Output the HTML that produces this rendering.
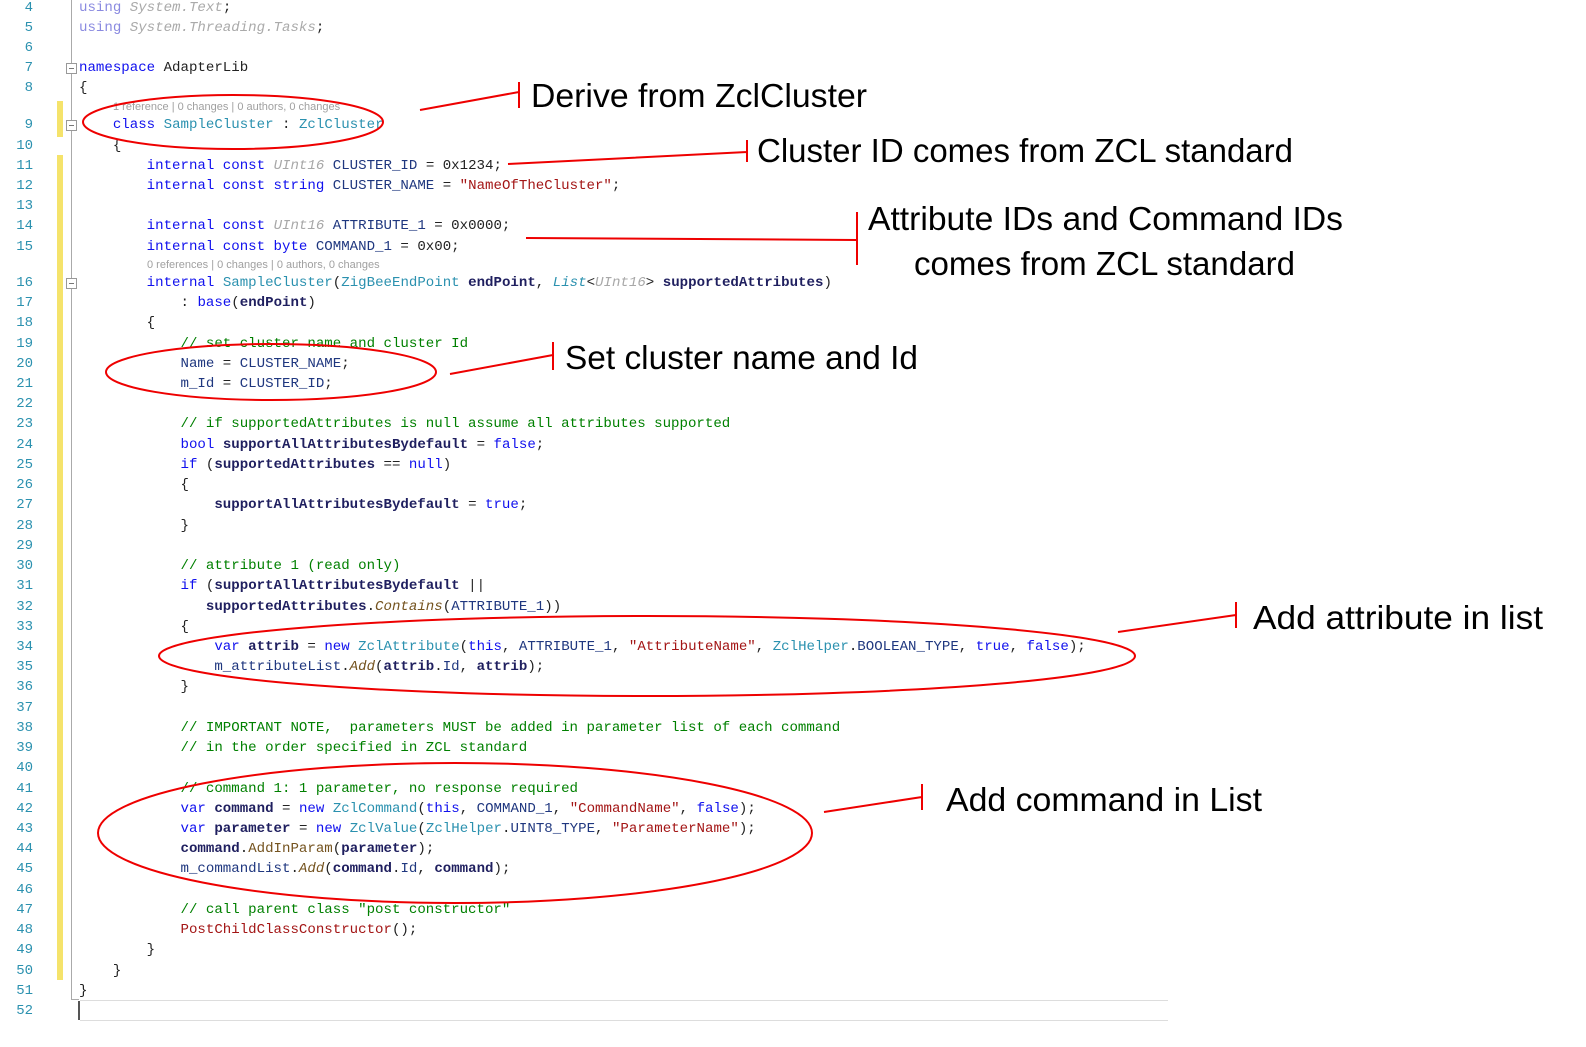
<!DOCTYPE html>
<html><head><meta charset="utf-8">
<style>
html,body{margin:0;padding:0;background:#fff;}
body{width:1586px;height:1047px;position:relative;overflow:hidden;}
.ln{position:absolute;left:0;width:33px;text-align:right;font:14px "Liberation Mono",monospace;color:#2b91af;line-height:20px;}
.cd{position:absolute;left:79px;font:14.1px "Liberation Mono",monospace;color:#1f377f;line-height:20px;white-space:pre;}
.ann{position:absolute;font:11px "Liberation Sans",sans-serif;color:#a0a0a0;white-space:pre;line-height:14px;}
.k{color:#1010ee}.t{color:#2b91af}.s{color:#a31515}.c{color:#008000}.g{color:#a8a8a8;font-style:italic}
.b{color:#1f1f5f;font-weight:bold}.m{color:#74531f}.mi{color:#74531f;font-style:italic}.p{color:#222}
.f1{color:#8a8ae0}.f2{color:#aaa;font-style:italic}
.box{position:absolute;left:66px;width:9px;height:9px;border:1px solid #999;background:#fff;}
.box:after{content:"";position:absolute;left:2px;top:4px;width:5px;height:1px;background:#777;}
</style></head><body>
<div style="position:absolute;left:71px;top:0;width:1px;height:1000px;background:#aaa"></div>
<div style="position:absolute;left:71px;top:999px;width:8px;height:1px;background:#aaa"></div>
<div style="position:absolute;left:57px;top:101px;width:6px;height:36px;background:#f5e36b"></div>
<div style="position:absolute;left:57px;top:155px;width:6px;height:825px;background:#f5e36b"></div>
<div style="position:absolute;left:80px;top:1000px;width:1088px;height:1px;background:#ddd"></div>
<div style="position:absolute;left:80px;top:1020px;width:1088px;height:1px;background:#ddd"></div>
<div style="position:absolute;left:78px;top:1001px;width:2px;height:19px;background:#555"></div>
<div class="box" style="top:63px"></div>
<div class="box" style="top:120px"></div>
<div class="box" style="top:278px"></div>

<div class="ln" style="top:-2px">4</div><div class="cd" style="top:-2px"><span class="f1">using</span> <span class="f2">System.Text</span><span class="p">;</span></div>
<div class="ln" style="top:18px">5</div><div class="cd" style="top:18px"><span class="f1">using</span> <span class="f2">System.Threading.Tasks</span><span class="p">;</span></div>
<div class="ln" style="top:38px">6</div>
<div class="ln" style="top:58px">7</div><div class="cd" style="top:58px"><span class="k">namespace</span> <span class="p">AdapterLib</span></div>
<div class="ln" style="top:78px">8</div><div class="cd" style="top:78px"><span class="p">{</span></div>
<div class="ann" style="left:113px;top:100px">1 reference | 0 changes | 0 authors, 0 changes</div>
<div class="ln" style="top:115px">9</div><div class="cd" style="top:115px">    <span class="k">class</span> <span class="t">SampleCluster</span> <span class="p">:</span> <span class="t">ZclCluster</span></div>
<div class="ln" style="top:136px">10</div><div class="cd" style="top:136px">    <span class="p">{</span></div>
<div class="ln" style="top:156px">11</div><div class="cd" style="top:156px">        <span class="k">internal const</span> <span class="g">UInt16</span> CLUSTER_ID <span class="p">= 0x1234;</span></div>
<div class="ln" style="top:176px">12</div><div class="cd" style="top:176px">        <span class="k">internal const string</span> CLUSTER_NAME <span class="p">=</span> <span class="s">"NameOfTheCluster"</span><span class="p">;</span></div>
<div class="ln" style="top:196px">13</div>
<div class="ln" style="top:216px">14</div><div class="cd" style="top:216px">        <span class="k">internal const</span> <span class="g">UInt16</span> ATTRIBUTE_1 <span class="p">= 0x0000;</span></div>
<div class="ln" style="top:237px">15</div><div class="cd" style="top:237px">        <span class="k">internal const byte</span> COMMAND_1 <span class="p">= 0x00;</span></div>
<div class="ann" style="left:147px;top:258px">0 references | 0 changes | 0 authors, 0 changes</div>
<div class="ln" style="top:273px">16</div><div class="cd" style="top:273px">        <span class="k">internal</span> <span class="t">SampleCluster</span><span class="p">(</span><span class="t">ZigBeeEndPoint</span> <span class="b">endPoint</span><span class="p">,</span> <span class="t" style="font-style:italic">List</span><span class="p">&lt;</span><span class="g">UInt16</span><span class="p">&gt;</span> <span class="b">supportedAttributes</span><span class="p">)</span></div>
<div class="ln" style="top:293px">17</div><div class="cd" style="top:293px">            <span class="p">:</span> <span class="k">base</span><span class="p">(</span><span class="b">endPoint</span><span class="p">)</span></div>
<div class="ln" style="top:313px">18</div><div class="cd" style="top:313px">        <span class="p">{</span></div>
<div class="ln" style="top:334px">19</div><div class="cd" style="top:334px">            <span class="c">// set cluster name and cluster Id</span></div>
<div class="ln" style="top:354px">20</div><div class="cd" style="top:354px">            Name <span class="p">=</span> CLUSTER_NAME<span class="p">;</span></div>
<div class="ln" style="top:374px">21</div><div class="cd" style="top:374px">            m_Id <span class="p">=</span> CLUSTER_ID<span class="p">;</span></div>
<div class="ln" style="top:394px">22</div>
<div class="ln" style="top:414px">23</div><div class="cd" style="top:414px">            <span class="c">// if supportedAttributes is null assume all attributes supported</span></div>
<div class="ln" style="top:435px">24</div><div class="cd" style="top:435px">            <span class="k">bool</span> <span class="b">supportAllAttributesBydefault</span> <span class="p">=</span> <span class="k">false</span><span class="p">;</span></div>
<div class="ln" style="top:455px">25</div><div class="cd" style="top:455px">            <span class="k">if</span> <span class="p">(</span><span class="b">supportedAttributes</span> <span class="p">==</span> <span class="k">null</span><span class="p">)</span></div>
<div class="ln" style="top:475px">26</div><div class="cd" style="top:475px">            <span class="p">{</span></div>
<div class="ln" style="top:495px">27</div><div class="cd" style="top:495px">                <span class="b">supportAllAttributesBydefault</span> <span class="p">=</span> <span class="k">true</span><span class="p">;</span></div>
<div class="ln" style="top:516px">28</div><div class="cd" style="top:516px">            <span class="p">}</span></div>
<div class="ln" style="top:536px">29</div>
<div class="ln" style="top:556px">30</div><div class="cd" style="top:556px">            <span class="c">// attribute 1 (read only)</span></div>
<div class="ln" style="top:576px">31</div><div class="cd" style="top:576px">            <span class="k">if</span> <span class="p">(</span><span class="b">supportAllAttributesBydefault</span> <span class="p">||</span></div>
<div class="ln" style="top:597px">32</div><div class="cd" style="top:597px">               <span class="b">supportedAttributes</span><span class="p">.</span><span class="mi">Contains</span><span class="p">(</span>ATTRIBUTE_1<span class="p">))</span></div>
<div class="ln" style="top:617px">33</div><div class="cd" style="top:617px">            <span class="p">{</span></div>
<div class="ln" style="top:637px">34</div><div class="cd" style="top:637px">                <span class="k">var</span> <span class="b">attrib</span> <span class="p">=</span> <span class="k">new</span> <span class="t">ZclAttribute</span><span class="p">(</span><span class="k">this</span><span class="p">,</span> ATTRIBUTE_1<span class="p">,</span> <span class="s">"AttributeName"</span><span class="p">,</span> <span class="t">ZclHelper</span><span class="p">.</span>BOOLEAN_TYPE<span class="p">,</span> <span class="k">true</span><span class="p">,</span> <span class="k">false</span><span class="p">);</span></div>
<div class="ln" style="top:657px">35</div><div class="cd" style="top:657px">                m_attributeList<span class="p">.</span><span class="mi">Add</span><span class="p">(</span><span class="b">attrib</span><span class="p">.</span>Id<span class="p">,</span> <span class="b">attrib</span><span class="p">);</span></div>
<div class="ln" style="top:677px">36</div><div class="cd" style="top:677px">            <span class="p">}</span></div>
<div class="ln" style="top:698px">37</div>
<div class="ln" style="top:718px">38</div><div class="cd" style="top:718px">            <span class="c">// IMPORTANT NOTE,  parameters MUST be added in parameter list of each command</span></div>
<div class="ln" style="top:738px">39</div><div class="cd" style="top:738px">            <span class="c">// in the order specified in ZCL standard</span></div>
<div class="ln" style="top:758px">40</div>
<div class="ln" style="top:779px">41</div><div class="cd" style="top:779px">            <span class="c">// command 1: 1 parameter, no response required</span></div>
<div class="ln" style="top:799px">42</div><div class="cd" style="top:799px">            <span class="k">var</span> <span class="b">command</span> <span class="p">=</span> <span class="k">new</span> <span class="t">ZclCommand</span><span class="p">(</span><span class="k">this</span><span class="p">,</span> COMMAND_1<span class="p">,</span> <span class="s">"CommandName"</span><span class="p">,</span> <span class="k">false</span><span class="p">);</span></div>
<div class="ln" style="top:819px">43</div><div class="cd" style="top:819px">            <span class="k">var</span> <span class="b">parameter</span> <span class="p">=</span> <span class="k">new</span> <span class="t">ZclValue</span><span class="p">(</span><span class="t">ZclHelper</span><span class="p">.</span>UINT8_TYPE<span class="p">,</span> <span class="s">"ParameterName"</span><span class="p">);</span></div>
<div class="ln" style="top:839px">44</div><div class="cd" style="top:839px">            <span class="b">command</span><span class="p">.</span><span class="m">AddInParam</span><span class="p">(</span><span class="b">parameter</span><span class="p">);</span></div>
<div class="ln" style="top:859px">45</div><div class="cd" style="top:859px">            m_commandList<span class="p">.</span><span class="mi">Add</span><span class="p">(</span><span class="b">command</span><span class="p">.</span>Id<span class="p">,</span> <span class="b">command</span><span class="p">);</span></div>
<div class="ln" style="top:880px">46</div>
<div class="ln" style="top:900px">47</div><div class="cd" style="top:900px">            <span class="c">// call parent class "post constructor"</span></div>
<div class="ln" style="top:920px">48</div><div class="cd" style="top:920px">            <span class="s">PostChildClassConstructor</span><span class="p">();</span></div>
<div class="ln" style="top:940px">49</div><div class="cd" style="top:940px">        <span class="p">}</span></div>
<div class="ln" style="top:961px">50</div><div class="cd" style="top:961px">    <span class="p">}</span></div>
<div class="ln" style="top:981px">51</div><div class="cd" style="top:981px"><span class="p">}</span></div>
<div class="ln" style="top:1001px">52</div>

<svg style="position:absolute;left:0;top:0" width="1586" height="1047">
<g fill="none" stroke="#e00" stroke-width="2">
<ellipse cx="233" cy="122" rx="150" ry="27"/>
<path d="M420 110 L519 92 M519 82 V108"/>
<path d="M508 164 L747 152 M747 140 V162"/>
<path d="M526 238 L857 240 M857 212 V265"/>
<ellipse cx="271" cy="372" rx="165" ry="28"/>
<path d="M450 374 L553 355 M553 342 V370"/>
<ellipse cx="647" cy="656" rx="488" ry="40"/>
<path d="M1118 632 L1236 615 M1236 602 V628"/>
<ellipse cx="455" cy="833" rx="357" ry="70"/>
<path d="M824 812 L922 797 M922 784 V810"/>
</g>
<g font-family="Liberation Sans, sans-serif" font-size="33" fill="#000">
<text x="531" y="107" textLength="336" lengthAdjust="spacingAndGlyphs">Derive from ZclCluster</text>
<text x="757" y="162" textLength="536" lengthAdjust="spacingAndGlyphs">Cluster ID comes from ZCL standard</text>
<text x="868" y="230" textLength="475" lengthAdjust="spacingAndGlyphs">Attribute IDs and Command IDs</text>
<text x="914" y="275" textLength="381" lengthAdjust="spacingAndGlyphs">comes from ZCL standard</text>
<text x="565" y="369" textLength="353" lengthAdjust="spacingAndGlyphs">Set cluster name and Id</text>
<text x="1253" y="629" textLength="290" lengthAdjust="spacingAndGlyphs">Add attribute in list</text>
<text x="946" y="811" textLength="316" lengthAdjust="spacingAndGlyphs">Add command in List</text>
</g>
</svg>
</body></html>
